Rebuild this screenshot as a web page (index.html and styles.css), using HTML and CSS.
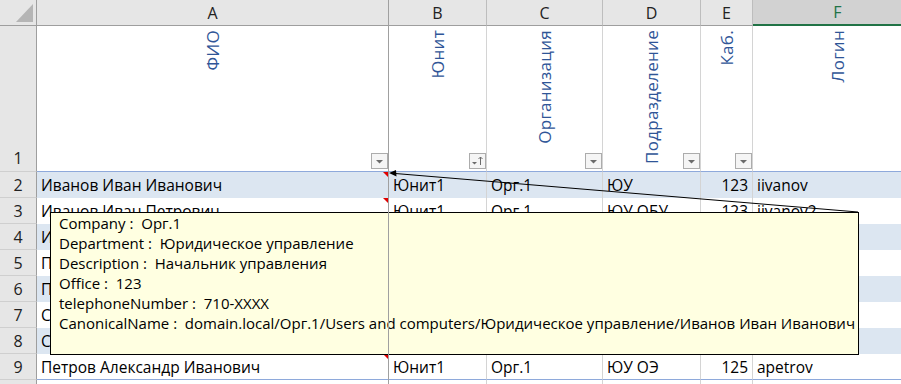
FILE: index.html
```html
<!DOCTYPE html>
<html lang="ru">
<head>
  <meta charset="UTF-8">
  <title>Сотрудники</title>
  <link rel="stylesheet" href="styles.css">
</head>
<body>
  <div class="sheet">
    <div class="grid">
      <!-- column headers -->
      <div class="corner"><span class="corner-tri"></span></div>
      <div class="colhdr">A</div>
      <div class="colhdr">B</div>
      <div class="colhdr">C</div>
      <div class="colhdr">D</div>
      <div class="colhdr">E</div>
      <div class="colhdr sel">F</div>

      <!-- row 1: table header -->
      <div class="row head">
        <div class="rowhdr">1</div>
        <div class="hcell"><span class="vlabel">ФИО</span>
          <svg class="filter" width="17" height="16" viewBox="0 0 17 16"><rect x="0.5" y="0.5" width="16" height="15" fill="#f5f5f5" stroke="#acacac"/><path d="M5 7h7l-3.5 3.5z" fill="#6b6b6b"/></svg>
        </div>
        <div class="hcell"><span class="vlabel">Юнит</span>
          <svg class="filter" width="17" height="16" viewBox="0 0 17 16"><rect x="0.5" y="0.5" width="16" height="15" fill="#f5f5f5" stroke="#acacac"/><path d="M3 9h5l-2.5 2.5z" fill="#6b6b6b"/><path d="M11.5 4v8M9.5 6l2-2 2 2" stroke="#6b6b6b" fill="none"/></svg>
        </div>
        <div class="hcell"><span class="vlabel">Организация</span>
          <svg class="filter" width="17" height="16" viewBox="0 0 17 16"><rect x="0.5" y="0.5" width="16" height="15" fill="#f5f5f5" stroke="#acacac"/><path d="M5 7h7l-3.5 3.5z" fill="#6b6b6b"/></svg>
        </div>
        <div class="hcell"><span class="vlabel">Подразделение</span>
          <svg class="filter" width="17" height="16" viewBox="0 0 17 16"><rect x="0.5" y="0.5" width="16" height="15" fill="#f5f5f5" stroke="#acacac"/><path d="M5 7h7l-3.5 3.5z" fill="#6b6b6b"/></svg>
        </div>
        <div class="hcell"><span class="vlabel">Каб.</span>
          <svg class="filter" width="17" height="16" viewBox="0 0 17 16"><rect x="0.5" y="0.5" width="16" height="15" fill="#f5f5f5" stroke="#acacac"/><path d="M5 7h7l-3.5 3.5z" fill="#6b6b6b"/></svg>
        </div>
        <div class="hcell"><span class="vlabel">Логин</span></div>
      </div>

      <div class="row even">
        <div class="rowhdr">2</div>
        <div class="cell note">Иванов Иван Иванович</div>
        <div class="cell">Юнит1</div>
        <div class="cell">Орг.1</div>
        <div class="cell">ЮУ</div>
        <div class="cell num">123</div>
        <div class="cell">iivanov</div>
      </div>
      <div class="row">
        <div class="rowhdr">3</div>
        <div class="cell note">Иванов Иван Петрович</div>
        <div class="cell">Юнит1</div>
        <div class="cell">Орг.1</div>
        <div class="cell">ЮУ ОБУ</div>
        <div class="cell num">123</div>
        <div class="cell">iivanov2</div>
      </div>
      <div class="row even">
        <div class="rowhdr">4</div>
        <div class="cell note">Иванова Мария Сергеевна</div>
        <div class="cell">Юнит1</div>
        <div class="cell">Орг.1</div>
        <div class="cell">ЮУ ОБУ</div>
        <div class="cell num">124</div>
        <div class="cell">mivanova</div>
      </div>
      <div class="row">
        <div class="rowhdr">5</div>
        <div class="cell note">Павлов Сергей Николаевич</div>
        <div class="cell">Юнит1</div>
        <div class="cell">Орг.1</div>
        <div class="cell">ЮУ ОЭ</div>
        <div class="cell num">125</div>
        <div class="cell">spavlov</div>
      </div>
      <div class="row even">
        <div class="rowhdr">6</div>
        <div class="cell note">Попова Анна Викторовна</div>
        <div class="cell">Юнит1</div>
        <div class="cell">Орг.1</div>
        <div class="cell">ЮУ ОЭ</div>
        <div class="cell num">125</div>
        <div class="cell">apopova</div>
      </div>
      <div class="row">
        <div class="rowhdr">7</div>
        <div class="cell note">Сидоров Петр Андреевич</div>
        <div class="cell">Юнит1</div>
        <div class="cell">Орг.1</div>
        <div class="cell">ЮУ ОБУ</div>
        <div class="cell num">126</div>
        <div class="cell">psidorov</div>
      </div>
      <div class="row even">
        <div class="rowhdr">8</div>
        <div class="cell note">Смирнова Ольга Игоревна</div>
        <div class="cell">Юнит1</div>
        <div class="cell">Орг.1</div>
        <div class="cell">ЮУ ОЭ</div>
        <div class="cell num">126</div>
        <div class="cell">osmirnova</div>
      </div>
      <div class="row last">
        <div class="rowhdr">9</div>
        <div class="cell note">Петров Александр Иванович</div>
        <div class="cell">Юнит1</div>
        <div class="cell">Орг.1</div>
        <div class="cell">ЮУ ОЭ</div>
        <div class="cell num">125</div>
        <div class="cell">apetrov</div>
      </div>
      <div class="row blank">
        <div class="rowhdr"></div>
        <div class="cell"></div><div class="cell"></div><div class="cell"></div>
        <div class="cell"></div><div class="cell"></div><div class="cell"></div>
      </div>
    </div>

    <!-- comment callout -->
    <svg class="connector" width="901" height="384" viewBox="0 0 901 384">
      <line x1="394" y1="173.4" x2="858" y2="212" stroke="#000" stroke-width="1"/>
      <path d="M389 173 L396 170 L396.5 176.5 Z" fill="#000"/>
    </svg>
    <div class="comment">
      <div class="line">Company :  Орг.1</div>
      <div class="line">Department :  Юридическое управление</div>
      <div class="line">Description :  Начальник управления</div>
      <div class="line">Office :  123</div>
      <div class="line">telephoneNumber :  710-XXXX</div>
      <div class="line">CanonicalName :  domain.local/Орг.1/Users and computers/Юридическое управление/Иванов Иван Иванович</div>
    </div>
    <div class="freeze"></div>
  </div>
</body>
</html>
```

FILE: styles.css
```css
html, body {
  margin: 0;
  padding: 0;
  background: #fff;
  overflow: hidden;
}
.sheet {
  position: relative;
  width: 901px;
  height: 384px;
  overflow: hidden;
  font-family: "Open Sans", "Liberation Sans", Arial, sans-serif;
  font-size: 15.5px;
  color: #000;
}
.grid {
  display: grid;
  grid-template-columns: 37px 352px 98px 116px 98px 52px 170px;
  grid-template-rows: 26px 146px repeat(8, 26px) 26px;
  width: 923px;
}
.row { display: contents; }

/* column header bar */
.corner,
.colhdr {
  background: #e6e6e6;
  border-right: 1px solid #bdbdbd;
  border-bottom: 1px solid #9e9e9e;
  box-sizing: border-box;
}
.corner {
  display: flex;
  justify-content: flex-end;
  align-items: flex-end;
  padding: 0 3px 3px 0;
  border-right-color: #9e9e9e;
}
.corner-tri {
  width: 0;
  height: 0;
  border-left: 17px solid transparent;
  border-bottom: 18px solid #b5b5b5;
}
.colhdr {
  display: flex;
  align-items: center;
  justify-content: center;
  color: #222;
  font-size: 16px;
}
.colhdr.sel {
  background: #d2d2d2;
  color: #217346;
  border-bottom: 2px solid #217346;
}

/* row numbers */
.rowhdr {
  background: #e6e6e6;
  border-right: 1px solid #9e9e9e;
  border-bottom: 1px solid #cfcfcf;
  box-sizing: border-box;
  display: flex;
  align-items: center;
  justify-content: center;
  color: #222;
  font-size: 16px;
}
.head .rowhdr {
  align-items: flex-end;
  padding-bottom: 2px;
}

/* table header row: label and filter button share one grid area */
.hcell {
  display: grid;
  grid-template: 1fr / 1fr;
  padding: 4px 0 2px;
  border-right: 1px solid #d4d4d4;
  border-bottom: 1px solid #8ea9db;
  box-sizing: border-box;
}
.vlabel {
  grid-area: 1 / 1;
  justify-self: center;
  align-self: start;
  writing-mode: vertical-rl;
  transform: rotate(180deg);
  color: #2f5597;
  font-size: 17px;
  letter-spacing: 0.3px;
  line-height: 20px;
}
.filter {
  grid-area: 1 / 1;
  display: block;
  justify-self: end;
  align-self: end;
}

/* data cells */
.cell {
  position: relative;
  display: flex;
  align-items: center;
  padding: 0 4px;
  border-right: 1px solid #d4d4d4;
  box-sizing: border-box;
  white-space: nowrap;
  overflow: hidden;
}
.cell.num { justify-content: flex-end; }
.row.even .cell { background: #dce6f1; }
.row.last .cell { border-bottom: 1px solid #8ea9db; }
.row.blank .rowhdr { border-bottom: none; }
.cell.note::after {
  content: "";
  position: absolute;
  top: 0;
  right: 0;
  border-top: 5px solid #e00000;
  border-left: 5px solid transparent;
}

/* overlays */
.connector {
  position: absolute;
  left: 0;
  top: 0;
  pointer-events: none;
}
.comment {
  position: absolute;
  left: 50px;
  top: 212px;
  width: 809px;
  height: 143px;
  box-sizing: border-box;
  padding: 0 8px;
  background: #ffffe1;
  border: 1px solid #000;
  font-size: 15px;
  line-height: 20px;
}
.comment .line { white-space: pre; }
.freeze {
  position: absolute;
  left: 388px;
  top: 0;
  width: 1px;
  height: 384px;
  background: #a0a0a0;
}
```
